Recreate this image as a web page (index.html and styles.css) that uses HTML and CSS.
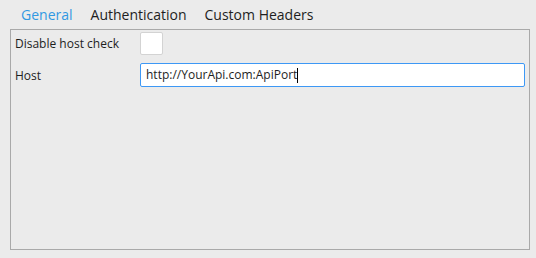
FILE: index.html
```html
<!DOCTYPE html>
<html lang="en">
<head>
    <meta charset="UTF-8">
    <title>Settings</title>
    <link rel="stylesheet" href="styles.css">
</head>
<body>
    <div class="tabs">
        <span class="tab active">General</span>
        <span class="tab">Authentication</span>
        <span class="tab">Custom Headers</span>
    </div>
    <div class="panel">
        <div class="row">
            <label>Disable host check</label>
            <div class="checkbox"></div>
        </div>
        <div class="row">
            <label>Host</label>
            <div class="textbox">http://YourApi.com:ApiPort<span class="caret"></span></div>
        </div>
    </div>
</body>
</html>
```

FILE: styles.css
```css
body {
    margin: 0;
    background: #ebebeb;
    font-family: "Open Sans", "Noto Sans", sans-serif;
    color: #1e1e1e;
}
.tabs {
    display: flex;
    gap: 18px;
    padding: 5px 0 0 21px;
    height: 29px;
    box-sizing: border-box;
}
.tab {
    font-size: 14px;
    line-height: 20px;
}
.tab.active {
    color: #3198e2;
}
.panel {
    margin: 0 6px 0 10px;
    height: 221px;
    box-sizing: border-box;
    border: 1px solid #a9a9a9;
    padding: 2px 4px 0 4px;
}
.row {
    display: flex;
    align-items: center;
    margin-bottom: 8px;
}
.row label {
    width: 125px;
    font-size: 12px;
}
.checkbox {
    width: 23px;
    height: 23px;
    box-sizing: border-box;
    background: #fff;
    border: 1px solid #d3d3d3;
    border-radius: 2px;
}
.textbox {
    flex: 1;
    height: 24px;
    box-sizing: border-box;
    background: #fff;
    border: 1px solid #3d98f5;
    border-radius: 2px;
    padding: 0 5px;
    font-size: 12px;
    line-height: 22px;
    display: flex;
    align-items: center;
}
.caret {
    display: inline-block;
    width: 1px;
    height: 15px;
    background: #000;
}
```
